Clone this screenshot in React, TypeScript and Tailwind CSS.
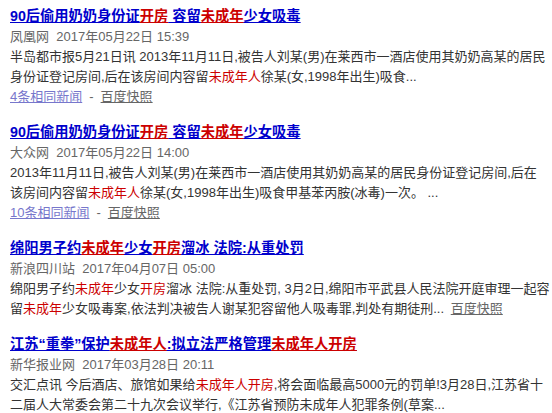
import React from "react";

const R = ({ children }: { children: React.ReactNode }) => (
  <span className="text-[#cc0000]">{children}</span>
);
const RT = ({ children }: { children: React.ReactNode }) => (
  <span className="text-[#cc0000] underline">{children}</span>
);

function Title({ children }: { children: React.ReactNode }) {
  return (
    <h3 className="text-[14.25px] font-bold leading-[21px] whitespace-nowrap">
      <a href="#" className="text-[#0000cc] underline">
        {children}
      </a>
    </h3>
  );
}

function Source({ name, date }: { name: string; date: string }) {
  return (
    <div className="text-[13px] leading-[20px] text-[#666666] whitespace-nowrap">
      {name}
      {"\u00a0\u00a0"}
      {date}
    </div>
  );
}

function Links({ same }: { same: string }) {
  return (
    <div className="text-[13px] leading-[20px] whitespace-nowrap">
      <a href="#" className="text-[#7777cc] underline">
        {same}
      </a>
      <span className="text-[#666666] mx-[7px]">-</span>
      <a href="#" className="text-[#666666] underline">
        百度快照
      </a>
    </div>
  );
}

function Body({ children }: { children: React.ReactNode }) {
  return (
    <div className="text-[13px] leading-[20px] text-[#333333] whitespace-nowrap">
      {children}
    </div>
  );
}

export default function App() {
  return (
    <div className="w-[552px] h-[413px] overflow-hidden bg-white pl-[10px] pt-[6px] [font-family:'Liberation_Sans','Noto_Sans_CJK_SC',sans-serif]">
      <div className="mb-[15px]">
        <Title>
          90后偷用奶奶身份证<RT>开房</RT> 容留<RT>未成年</RT>少女吸毒
        </Title>
        <Source name="凤凰网" date="2017年05月22日 15:39" />
        <Body>
          <div>半岛都市报5月21日讯 2013年11月11日,被告人刘某(男)在莱西市一酒店使用其奶奶高某的居民</div>
          <div>
            身份证登记房间,后在该房间内容留<R>未成年人</R>徐某(女,1998年出生)吸食...
          </div>
        </Body>
        <Links same="4条相同新闻" />
      </div>

      <div className="mb-[15px]">
        <Title>
          90后偷用奶奶身份证<RT>开房</RT> 容留<RT>未成年</RT>少女吸毒
        </Title>
        <Source name="大众网" date="2017年05月22日 14:00" />
        <Body>
          <div>2013年11月11日,被告人刘某(男)在莱西市一酒店使用其奶奶高某的居民身份证登记房间,后在</div>
          <div>
            该房间内容留<R>未成年人</R>徐某(女,1998年出生)吸食甲基苯丙胺(冰毒)一次。 ...
          </div>
        </Body>
        <Links same="10条相同新闻" />
      </div>

      <div className="mb-[15px]">
        <Title>
          绵阳男子约<RT>未成年</RT>少女<RT>开房</RT>溜冰 法院:从重处罚
        </Title>
        <Source name="新浪四川站" date="2017年04月07日 05:00" />
        <Body>
          <div>
            绵阳男子约<R>未成年</R>少女<R>开房</R>溜冰 法院:从重处罚, 3月2日,绵阳市平武县人民法院开庭审理一起容
          </div>
          <div>
            留<R>未成年</R>少女吸毒案,依法判决被告人谢某犯容留他人吸毒罪,判处有期徒刑...{" "}
            <a href="#" className="text-[#666666] underline ml-[3px]">
              百度快照
            </a>
          </div>
        </Body>
      </div>

      <div className="mb-[15px]">
        <Title>
          江苏“重拳”保护<RT>未成年人</RT>:拟立法严格管理<RT>未成年人开房</RT>
        </Title>
        <Source name="新华报业网" date="2017年03月28日 20:11" />
        <Body>
          <div>
            交汇点讯 今后酒店、旅馆如果给<R>未成年人开房</R>,将会面临最高5000元的罚单!3月28日,江苏省十
          </div>
          <div>二届人大常委会第二十九次会议举行,《江苏省预防未成年人犯罪条例(草案...</div>
        </Body>
      </div>
    </div>
  );
}
